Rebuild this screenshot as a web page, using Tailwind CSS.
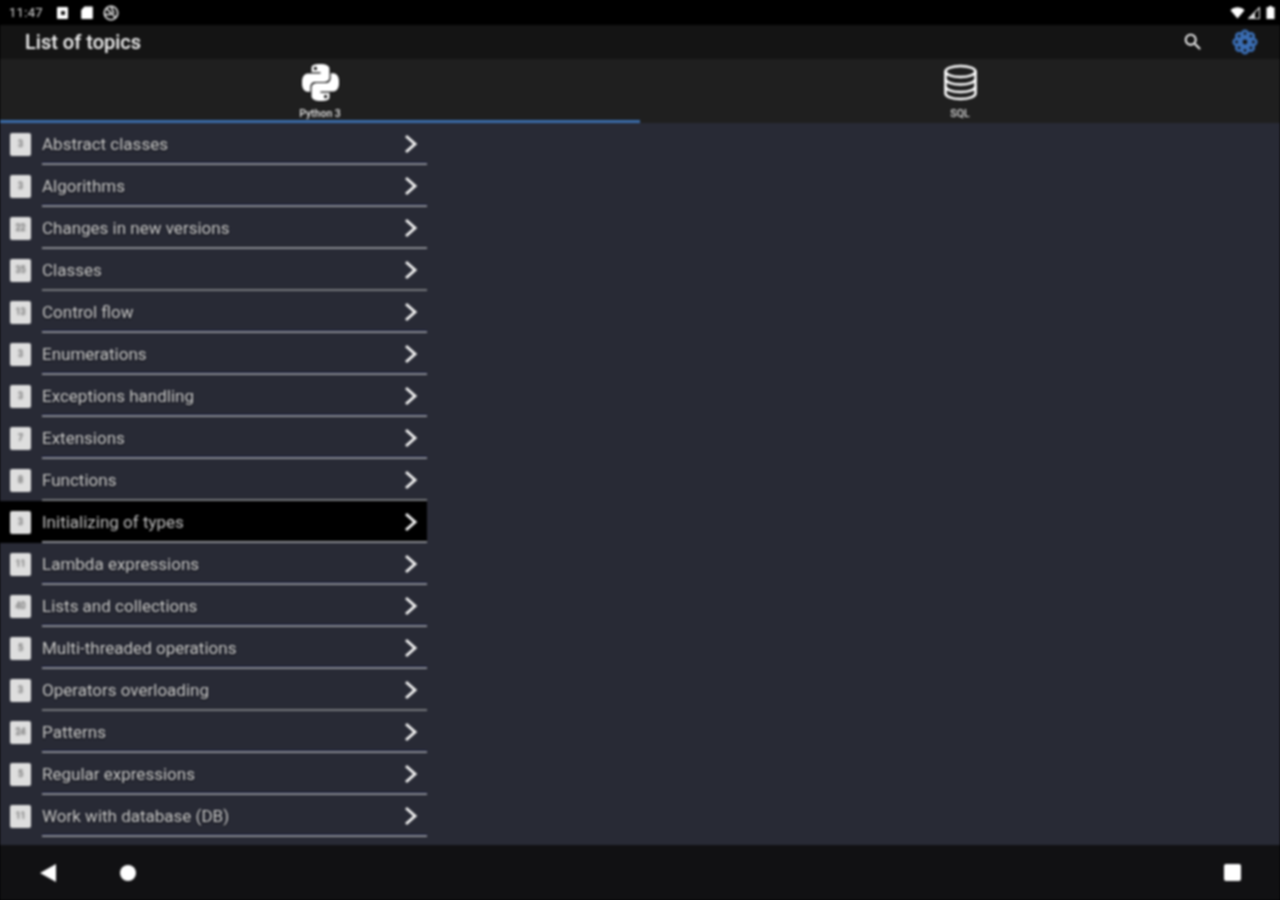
<!DOCTYPE html>
<html lang="en">
<head>
<meta charset="utf-8">
<title>List of topics</title>
<script src="https://cdn.jsdelivr.net/npm/@tailwindcss/browser@4"></script>
</head>
<body class="m-0 bg-black">
<div class="flex h-[900px] w-[1280px] flex-col overflow-hidden bg-[#282a35] font-['Roboto',sans-serif] blur-[0.8px]">

  <!-- status bar -->
  <div class="flex h-[25px] shrink-0 items-center justify-between bg-black pl-[9px] pr-[5px] text-white">
    <div class="flex items-center">
      <span class="w-[36px] text-[13px] leading-none tracking-[0.3px] text-[#d8d8d8]">11:47</span>
      <span class="ml-[12px] flex h-[12px] w-[11px] items-center justify-center rounded-[1px] bg-white"><span class="h-[4px] w-[4px] bg-[#222]"></span></span>
      <svg class="ml-[13px]" width="12" height="13" viewBox="0 0 12 13"><path d="M3.5 0.5H11a.8.8 0 0 1 .8.8v10.9a.8.8 0 0 1-.8.8H1a.8.8 0 0 1-.8-.8V4z" fill="#fff"/></svg>
      <svg class="ml-[10px]" width="16" height="16" viewBox="0 0 16 16" fill="none" stroke="#eee" stroke-width="1.6"><circle cx="8" cy="8" r="6.7"/><path d="M3.5 3.5L12.5 12.5M8 1.5L11 8.5M1.7 9.5H8"/></svg>
    </div>
    <div class="flex items-center gap-[3px]">
      <svg width="15" height="12" viewBox="0 0 15 12"><path d="M0.5 3.2C4.5 -0.6 10.5 -0.6 14.5 3.2L7.5 11.5z" fill="#fff"/></svg>
      <svg width="12" height="12" viewBox="0 0 12 12"><path d="M11.5 0.5V11.5H0.5z" fill="none" stroke="#ddd" stroke-width="1.2"/><path d="M7 5.5V11.5H1z" fill="#ddd"/></svg>
      <svg class="ml-[3px]" width="9" height="13" viewBox="0 0 9 13"><path d="M3 0H6V1.2H8.5V13H0.5V1.2H3z" fill="#fff"/></svg>
    </div>
  </div>

  <!-- app bar -->
  <div class="flex h-[34px] shrink-0 items-center justify-between bg-[#141414] pl-[25px] pr-[21px]">
    <span class="text-[20px] font-medium leading-none text-[#f2f2f2]">List of topics</span>
    <div class="flex items-center gap-[27px]">
      <svg width="22" height="22" viewBox="0 0 24 24" fill="#fff"><path d="M15.5 14h-.79l-.28-.27A6.47 6.47 0 0 0 16 9.5 6.5 6.5 0 1 0 9.5 16c1.61 0 3.09-.59 4.23-1.57l.27.28v.79l5 4.99L20.49 19l-4.99-5zm-6 0C7.01 14 5 11.99 5 9.5S7.01 5 9.5 5 14 7.01 14 9.5 11.99 14 9.5 14z"/></svg>
      <svg width="28" height="28" viewBox="0 0 28 28" fill="none" stroke="#3a6db3" stroke-width="2.8">
        <circle cx="14" cy="5.6" r="2.8"/><circle cx="19.9" cy="8.1" r="2.8"/><circle cx="22.4" cy="14" r="2.8"/><circle cx="19.9" cy="19.9" r="2.8"/><circle cx="14" cy="22.4" r="2.8"/><circle cx="8.1" cy="19.9" r="2.8"/><circle cx="5.6" cy="14" r="2.8"/><circle cx="8.1" cy="8.1" r="2.8"/><circle cx="14" cy="14" r="3.8"/>
      </svg>
    </div>
  </div>

  <!-- tabs -->
  <div class="grid h-[64px] shrink-0 grid-cols-2 bg-[#1f1f1f]">
    <div class="flex flex-col items-center border-b-[3px] border-[#3a6ba8] pt-[5px]">
      <svg class="[filter:drop-shadow(0_0_1px_#000)]" width="37" height="37" viewBox="0 0 24 24" fill="#fff"><path d="M14.25.18l.9.2.73.26.59.3.45.32.34.34.25.34.16.33.1.3.04.26.02.2-.01.13V8.5l-.05.63-.13.55-.21.46-.26.38-.3.31-.33.25-.35.19-.35.14-.33.1-.3.07-.26.04-.21.02H8.77l-.69.05-.59.14-.5.22-.41.27-.33.32-.27.35-.2.36-.15.37-.1.35-.07.32-.04.27-.02.21v3.06H3.17l-.21-.03-.28-.07-.32-.12-.35-.18-.36-.26-.36-.36-.35-.46-.32-.59-.28-.73-.21-.88-.14-1.05-.05-1.23.06-1.22.16-1.04.24-.87.32-.71.36-.57.4-.44.42-.33.42-.24.4-.16.36-.1.32-.05.24-.01h.16l.06.01h8.16v-.83H6.18l-.01-2.75-.02-.37.05-.34.11-.31.17-.28.25-.26.31-.23.38-.2.44-.18.51-.15.58-.12.64-.1.71-.06.77-.04.84-.02 1.27.05zm-6.3 1.98l-.23.33-.08.41.08.41.23.34.33.22.41.09.41-.09.33-.22.23-.34.08-.41-.08-.41-.23-.33-.33-.22-.41-.09-.41.09zm13.09 3.95l.28.06.32.12.35.18.36.27.36.35.35.47.32.59.28.73.21.88.14 1.04.05 1.23-.06 1.23-.16 1.04-.24.86-.32.71-.36.57-.4.45-.42.33-.42.24-.4.16-.36.09-.32.05-.24.02-.16-.01h-8.22v.82h5.84l.01 2.76.02.36-.05.34-.11.31-.17.29-.25.25-.31.24-.38.2-.44.17-.51.15-.58.13-.64.09-.71.07-.77.04-.84.01-1.27-.04-1.07-.14-.9-.2-.73-.25-.59-.3-.45-.33-.34-.34-.25-.34-.16-.33-.1-.3-.04-.25-.02-.2.01-.13v-5.34l.05-.64.13-.54.21-.46.26-.38.3-.32.33-.24.35-.2.35-.14.33-.1.3-.06.26-.04.21-.02.13-.01h5.84l.69-.05.59-.14.5-.21.41-.28.33-.32.27-.35.2-.36.15-.36.1-.35.07-.32.04-.28.02-.21V6.07h2.09l.14.01zm-6.47 14.25l-.23.33-.08.41.08.41.23.33.33.23.41.08.41-.08.33-.23.23-.33.08-.41-.08-.41-.23-.33-.33-.23-.41-.08-.41.08z"/></svg>
      <span class="mt-[7px] text-[10.5px] font-medium leading-[12px] text-[#e4e4e4]">Python 3</span>
    </div>
    <div class="flex flex-col items-center pt-[5px]">
      <svg width="37" height="37" viewBox="0 0 37 37" fill="none" stroke="#fff" stroke-width="2.6">
        <ellipse cx="18.5" cy="7.5" rx="15" ry="5.5"/>
        <path d="M3.5 7.5V29.5C3.5 32.5 10 35 18.5 35S33.5 32.5 33.5 29.5V7.5"/>
        <path d="M3.5 15C3.5 18 10 20.5 18.5 20.5S33.5 18 33.5 15"/>
        <path d="M3.5 22.5C3.5 25.5 10 28 18.5 28S33.5 25.5 33.5 22.5"/>
      </svg>
      <span class="mt-[7px] text-[10.5px] font-medium leading-[12px] text-[#d8d8d8]">SQL</span>
    </div>
  </div>

  <!-- topic list -->
  <div class="flex min-h-0 flex-1 flex-col [text-shadow:0_1px_2px_#000a]">
    <div class="flex h-[42px] w-[427px] shrink-0 items-center">
      <span class="ml-[10px] flex h-[23px] w-[21px] shrink-0 items-center justify-center rounded-[2px] bg-[#dedede] text-[9px] text-[#9a9a9a]">3</span>
      <div class="ml-[11px] flex h-full flex-1 flex-col">
        <div class="flex flex-1 items-center justify-between pr-[9px] pt-[2px]"><span class="pt-[2px] text-[17px] text-[#c9c9c9]">Abstract classes</span><svg width="14" height="20" viewBox="0 0 14 20" fill="none" stroke="#f0f0f0" stroke-width="3"><path d="M2 2L11 10L2 18"/></svg></div>
        <div class="h-[1px] bg-[#15183a]"></div><div class="h-[2px] bg-[#8a8c92]"></div>
      </div>
    </div>
    <div class="flex h-[42px] w-[427px] shrink-0 items-center">
      <span class="ml-[10px] flex h-[23px] w-[21px] shrink-0 items-center justify-center rounded-[2px] bg-[#dedede] text-[9px] text-[#9a9a9a]">3</span>
      <div class="ml-[11px] flex h-full flex-1 flex-col">
        <div class="flex flex-1 items-center justify-between pr-[9px] pt-[2px]"><span class="pt-[2px] text-[17px] text-[#c9c9c9]">Algorithms</span><svg width="14" height="20" viewBox="0 0 14 20" fill="none" stroke="#f0f0f0" stroke-width="3"><path d="M2 2L11 10L2 18"/></svg></div>
        <div class="h-[1px] bg-[#15183a]"></div><div class="h-[2px] bg-[#8a8c92]"></div>
      </div>
    </div>
    <div class="flex h-[42px] w-[427px] shrink-0 items-center">
      <span class="ml-[10px] flex h-[23px] w-[21px] shrink-0 items-center justify-center rounded-[2px] bg-[#dedede] text-[9px] text-[#9a9a9a]">22</span>
      <div class="ml-[11px] flex h-full flex-1 flex-col">
        <div class="flex flex-1 items-center justify-between pr-[9px] pt-[2px]"><span class="pt-[2px] text-[17px] text-[#c9c9c9]">Changes in new versions</span><svg width="14" height="20" viewBox="0 0 14 20" fill="none" stroke="#f0f0f0" stroke-width="3"><path d="M2 2L11 10L2 18"/></svg></div>
        <div class="h-[1px] bg-[#24262f]"></div><div class="h-[2px] bg-[#8a8c92]"></div>
      </div>
    </div>
    <div class="flex h-[42px] w-[427px] shrink-0 items-center">
      <span class="ml-[10px] flex h-[23px] w-[21px] shrink-0 items-center justify-center rounded-[2px] bg-[#dedede] text-[9px] text-[#9a9a9a]">35</span>
      <div class="ml-[11px] flex h-full flex-1 flex-col">
        <div class="flex flex-1 items-center justify-between pr-[9px] pt-[2px]"><span class="pt-[2px] text-[17px] text-[#c9c9c9]">Classes</span><svg width="14" height="20" viewBox="0 0 14 20" fill="none" stroke="#f0f0f0" stroke-width="3"><path d="M2 2L11 10L2 18"/></svg></div>
        <div class="h-[1px] bg-[#24262f]"></div><div class="h-[2px] bg-[#77797e]"></div>
      </div>
    </div>
    <div class="flex h-[42px] w-[427px] shrink-0 items-center">
      <span class="ml-[10px] flex h-[23px] w-[21px] shrink-0 items-center justify-center rounded-[2px] bg-[#dedede] text-[9px] text-[#9a9a9a]">13</span>
      <div class="ml-[11px] flex h-full flex-1 flex-col">
        <div class="flex flex-1 items-center justify-between pr-[9px] pt-[2px]"><span class="pt-[2px] text-[17px] text-[#c9c9c9]">Control flow</span><svg width="14" height="20" viewBox="0 0 14 20" fill="none" stroke="#f0f0f0" stroke-width="3"><path d="M2 2L11 10L2 18"/></svg></div>
        <div class="h-[1px] bg-[#15183a]"></div><div class="h-[2px] bg-[#8a8c92]"></div>
      </div>
    </div>
    <div class="flex h-[42px] w-[427px] shrink-0 items-center">
      <span class="ml-[10px] flex h-[23px] w-[21px] shrink-0 items-center justify-center rounded-[2px] bg-[#dedede] text-[9px] text-[#9a9a9a]">3</span>
      <div class="ml-[11px] flex h-full flex-1 flex-col">
        <div class="flex flex-1 items-center justify-between pr-[9px] pt-[2px]"><span class="pt-[2px] text-[17px] text-[#c9c9c9]">Enumerations</span><svg width="14" height="20" viewBox="0 0 14 20" fill="none" stroke="#f0f0f0" stroke-width="3"><path d="M2 2L11 10L2 18"/></svg></div>
        <div class="h-[1px] bg-[#15183a]"></div><div class="h-[2px] bg-[#8a8c92]"></div>
      </div>
    </div>
    <div class="flex h-[42px] w-[427px] shrink-0 items-center">
      <span class="ml-[10px] flex h-[23px] w-[21px] shrink-0 items-center justify-center rounded-[2px] bg-[#dedede] text-[9px] text-[#9a9a9a]">3</span>
      <div class="ml-[11px] flex h-full flex-1 flex-col">
        <div class="flex flex-1 items-center justify-between pr-[9px] pt-[2px]"><span class="pt-[2px] text-[17px] text-[#c9c9c9]">Exceptions handling</span><svg width="14" height="20" viewBox="0 0 14 20" fill="none" stroke="#f0f0f0" stroke-width="3"><path d="M2 2L11 10L2 18"/></svg></div>
        <div class="h-[1px] bg-[#15183a]"></div><div class="h-[2px] bg-[#8a8c92]"></div>
      </div>
    </div>
    <div class="flex h-[42px] w-[427px] shrink-0 items-center">
      <span class="ml-[10px] flex h-[23px] w-[21px] shrink-0 items-center justify-center rounded-[2px] bg-[#dedede] text-[9px] text-[#9a9a9a]">7</span>
      <div class="ml-[11px] flex h-full flex-1 flex-col">
        <div class="flex flex-1 items-center justify-between pr-[9px] pt-[2px]"><span class="pt-[2px] text-[17px] text-[#c9c9c9]">Extensions</span><svg width="14" height="20" viewBox="0 0 14 20" fill="none" stroke="#f0f0f0" stroke-width="3"><path d="M2 2L11 10L2 18"/></svg></div>
        <div class="h-[1px] bg-[#15183a]"></div><div class="h-[2px] bg-[#8a8c92]"></div>
      </div>
    </div>
    <div class="flex h-[42px] w-[427px] shrink-0 items-center">
      <span class="ml-[10px] flex h-[23px] w-[21px] shrink-0 items-center justify-center rounded-[2px] bg-[#dedede] text-[9px] text-[#9a9a9a]">8</span>
      <div class="ml-[11px] flex h-full flex-1 flex-col">
        <div class="flex flex-1 items-center justify-between pr-[9px] pt-[2px]"><span class="pt-[2px] text-[17px] text-[#c9c9c9]">Functions</span><svg width="14" height="20" viewBox="0 0 14 20" fill="none" stroke="#f0f0f0" stroke-width="3"><path d="M2 2L11 10L2 18"/></svg></div>
        <div class="h-[1px] bg-[#24262f]"></div><div class="h-[2px] bg-[#77797e]"></div>
      </div>
    </div>
    <div class="flex h-[42px] w-[427px] shrink-0 items-center bg-black">
      <span class="ml-[10px] flex h-[23px] w-[21px] shrink-0 items-center justify-center rounded-[2px] bg-[#dedede] text-[9px] text-[#9a9a9a]">3</span>
      <div class="ml-[11px] flex h-full flex-1 flex-col">
        <div class="flex flex-1 items-center justify-between pr-[9px] pt-[2px]"><span class="pt-[2px] text-[17px] text-[#bdbdbd]">Initializing of types</span><svg width="14" height="20" viewBox="0 0 14 20" fill="none" stroke="#f0f0f0" stroke-width="3"><path d="M2 2L11 10L2 18"/></svg></div>
        <div class="h-[1px] bg-black"></div><div class="h-[2px] bg-[#8a8c92]"></div>
      </div>
    </div>
    <div class="flex h-[42px] w-[427px] shrink-0 items-center">
      <span class="ml-[10px] flex h-[23px] w-[21px] shrink-0 items-center justify-center rounded-[2px] bg-[#dedede] text-[9px] text-[#9a9a9a]">11</span>
      <div class="ml-[11px] flex h-full flex-1 flex-col">
        <div class="flex flex-1 items-center justify-between pr-[9px] pt-[2px]"><span class="pt-[2px] text-[17px] text-[#c9c9c9]">Lambda expressions</span><svg width="14" height="20" viewBox="0 0 14 20" fill="none" stroke="#f0f0f0" stroke-width="3"><path d="M2 2L11 10L2 18"/></svg></div>
        <div class="h-[1px] bg-[#15183a]"></div><div class="h-[2px] bg-[#8a8c92]"></div>
      </div>
    </div>
    <div class="flex h-[42px] w-[427px] shrink-0 items-center">
      <span class="ml-[10px] flex h-[23px] w-[21px] shrink-0 items-center justify-center rounded-[2px] bg-[#dedede] text-[9px] text-[#9a9a9a]">40</span>
      <div class="ml-[11px] flex h-full flex-1 flex-col">
        <div class="flex flex-1 items-center justify-between pr-[9px] pt-[2px]"><span class="pt-[2px] text-[17px] text-[#c9c9c9]">Lists and collections</span><svg width="14" height="20" viewBox="0 0 14 20" fill="none" stroke="#f0f0f0" stroke-width="3"><path d="M2 2L11 10L2 18"/></svg></div>
        <div class="h-[1px] bg-[#15183a]"></div><div class="h-[2px] bg-[#8a8c92]"></div>
      </div>
    </div>
    <div class="flex h-[42px] w-[427px] shrink-0 items-center">
      <span class="ml-[10px] flex h-[23px] w-[21px] shrink-0 items-center justify-center rounded-[2px] bg-[#dedede] text-[9px] text-[#9a9a9a]">5</span>
      <div class="ml-[11px] flex h-full flex-1 flex-col">
        <div class="flex flex-1 items-center justify-between pr-[9px] pt-[2px]"><span class="pt-[2px] text-[17px] text-[#c9c9c9]">Multi-threaded operations</span><svg width="14" height="20" viewBox="0 0 14 20" fill="none" stroke="#f0f0f0" stroke-width="3"><path d="M2 2L11 10L2 18"/></svg></div>
        <div class="h-[1px] bg-[#15183a]"></div><div class="h-[2px] bg-[#8a8c92]"></div>
      </div>
    </div>
    <div class="flex h-[42px] w-[427px] shrink-0 items-center">
      <span class="ml-[10px] flex h-[23px] w-[21px] shrink-0 items-center justify-center rounded-[2px] bg-[#dedede] text-[9px] text-[#9a9a9a]">3</span>
      <div class="ml-[11px] flex h-full flex-1 flex-col">
        <div class="flex flex-1 items-center justify-between pr-[9px] pt-[2px]"><span class="pt-[2px] text-[17px] text-[#c9c9c9]">Operators overloading</span><svg width="14" height="20" viewBox="0 0 14 20" fill="none" stroke="#f0f0f0" stroke-width="3"><path d="M2 2L11 10L2 18"/></svg></div>
        <div class="h-[1px] bg-[#24262f]"></div><div class="h-[2px] bg-[#77797e]"></div>
      </div>
    </div>
    <div class="flex h-[42px] w-[427px] shrink-0 items-center">
      <span class="ml-[10px] flex h-[23px] w-[21px] shrink-0 items-center justify-center rounded-[2px] bg-[#dedede] text-[9px] text-[#9a9a9a]">24</span>
      <div class="ml-[11px] flex h-full flex-1 flex-col">
        <div class="flex flex-1 items-center justify-between pr-[9px] pt-[2px]"><span class="pt-[2px] text-[17px] text-[#c9c9c9]">Patterns</span><svg width="14" height="20" viewBox="0 0 14 20" fill="none" stroke="#f0f0f0" stroke-width="3"><path d="M2 2L11 10L2 18"/></svg></div>
        <div class="h-[1px] bg-[#15183a]"></div><div class="h-[2px] bg-[#8a8c92]"></div>
      </div>
    </div>
    <div class="flex h-[42px] w-[427px] shrink-0 items-center">
      <span class="ml-[10px] flex h-[23px] w-[21px] shrink-0 items-center justify-center rounded-[2px] bg-[#dedede] text-[9px] text-[#9a9a9a]">5</span>
      <div class="ml-[11px] flex h-full flex-1 flex-col">
        <div class="flex flex-1 items-center justify-between pr-[9px] pt-[2px]"><span class="pt-[2px] text-[17px] text-[#c9c9c9]">Regular expressions</span><svg width="14" height="20" viewBox="0 0 14 20" fill="none" stroke="#f0f0f0" stroke-width="3"><path d="M2 2L11 10L2 18"/></svg></div>
        <div class="h-[1px] bg-[#15183a]"></div><div class="h-[2px] bg-[#8a8c92]"></div>
      </div>
    </div>
    <div class="flex h-[42px] w-[427px] shrink-0 items-center">
      <span class="ml-[10px] flex h-[23px] w-[21px] shrink-0 items-center justify-center rounded-[2px] bg-[#dedede] text-[9px] text-[#9a9a9a]">11</span>
      <div class="ml-[11px] flex h-full flex-1 flex-col">
        <div class="flex flex-1 items-center justify-between pr-[9px] pt-[2px]"><span class="pt-[2px] text-[17px] text-[#c9c9c9]">Work with database (DB)</span><svg width="14" height="20" viewBox="0 0 14 20" fill="none" stroke="#f0f0f0" stroke-width="3"><path d="M2 2L11 10L2 18"/></svg></div>
        <div class="h-[1px] bg-[#15183a]"></div><div class="h-[2px] bg-[#8a8c92]"></div>
      </div>
    </div>
  </div>

  <!-- navigation bar -->
  <div class="flex h-[55px] shrink-0 items-center bg-[#111113] pl-[40px] pr-[39px]">
    <svg width="16" height="18" viewBox="0 0 16 18"><path d="M16 0V18L0 9z" fill="#fff"/></svg>
    <span class="ml-[64px] h-[16px] w-[16px] rounded-full bg-white"></span>
    <span class="ml-auto h-[17px] w-[17px] rounded-[2px] bg-white"></span>
  </div>
</div>
</body>
</html>
